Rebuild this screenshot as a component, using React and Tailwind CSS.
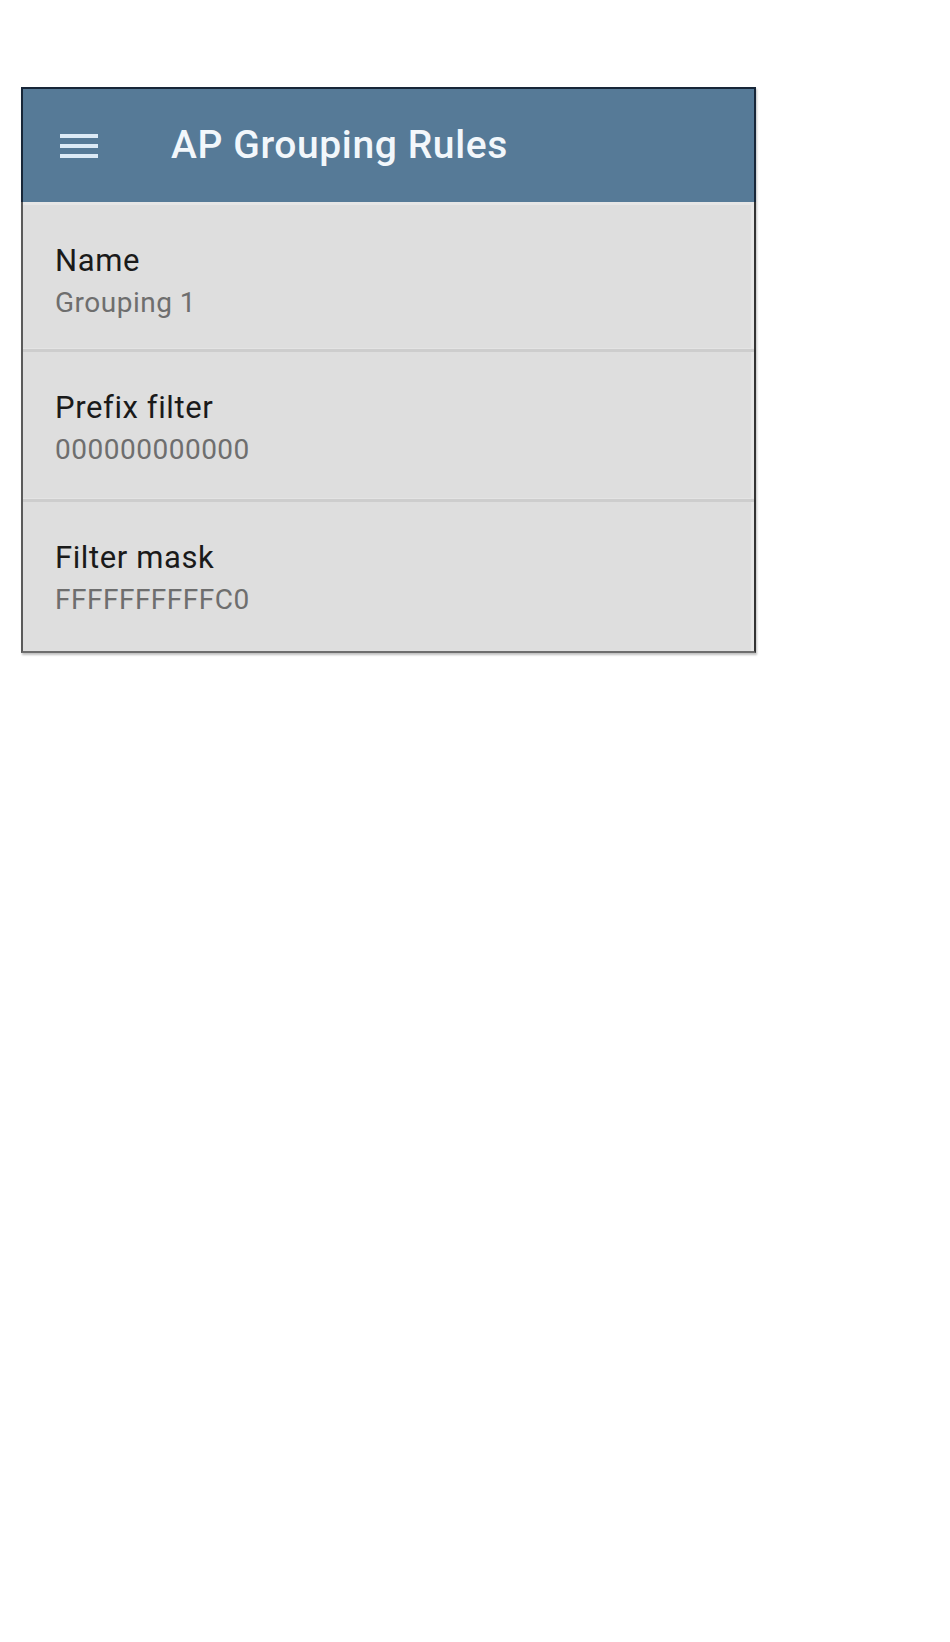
const rows = [
  { label: 'Name', value: 'Grouping 1' },
  { label: 'Prefix filter', value: '000000000000' },
  { label: 'Filter mask', value: 'FFFFFFFFFFC0' },
];

function MenuIcon() {
  return (
    <div className="flex w-[38px] flex-col gap-[6px]">
      <div className="h-[4px] bg-[#dceaf6]" />
      <div className="h-[4px] bg-[#dceaf6]" />
      <div className="h-[4px] bg-[#dceaf6]" />
    </div>
  );
}

export default function App() {
  return (
    <div className="min-h-[1642px] bg-white pl-[21px] pt-[87px]" style={{ fontFamily: 'Roboto, "Noto Sans", sans-serif' }}>
      <div className="w-[735px] shadow-[1px_2px_2px_rgba(0,0,0,0.25)]">
        {/* toolbar */}
        <div className="flex h-[115px] items-center border-2 border-b-0 border-[#172638] bg-[#567a97] pl-[37px]">
          <MenuIcon />
          <h1 className="ml-[73px] text-[39px] font-medium leading-none tracking-[0.6px] text-[#f2f7fb]">AP Grouping Rules</h1>
        </div>

        <div className="border-x-2 border-b-2 border-l-[#5a5a5a] border-r-[#333] border-b-[#6e6e6e] bg-[#dedede]">
          {rows.map((r, i) => (
            <div key={r.label}>
              <div className={`border-r-[3px] border-[#e6e6e6] pl-[32px] pt-[39px] ${i === 0 ? 'h-[146px] border-t-[3px] pt-[36px]' : i === 2 ? 'h-[149px]' : 'h-[146px]'}`}>
                <div className="text-[31px] leading-[34px] tracking-[0.6px] text-[#1a1a1a]">{r.label}</div>
                <div className="mt-[9px] text-[28px] leading-[32px] tracking-[0.5px] text-[#6e6e6e]">{r.value}</div>
              </div>
              {i < rows.length - 1 && <div className="h-[4px] border-t border-[#e4e4e4] bg-[#cdcdcd]" />}
            </div>
          ))}
        </div>
      </div>
    </div>
  );
}
